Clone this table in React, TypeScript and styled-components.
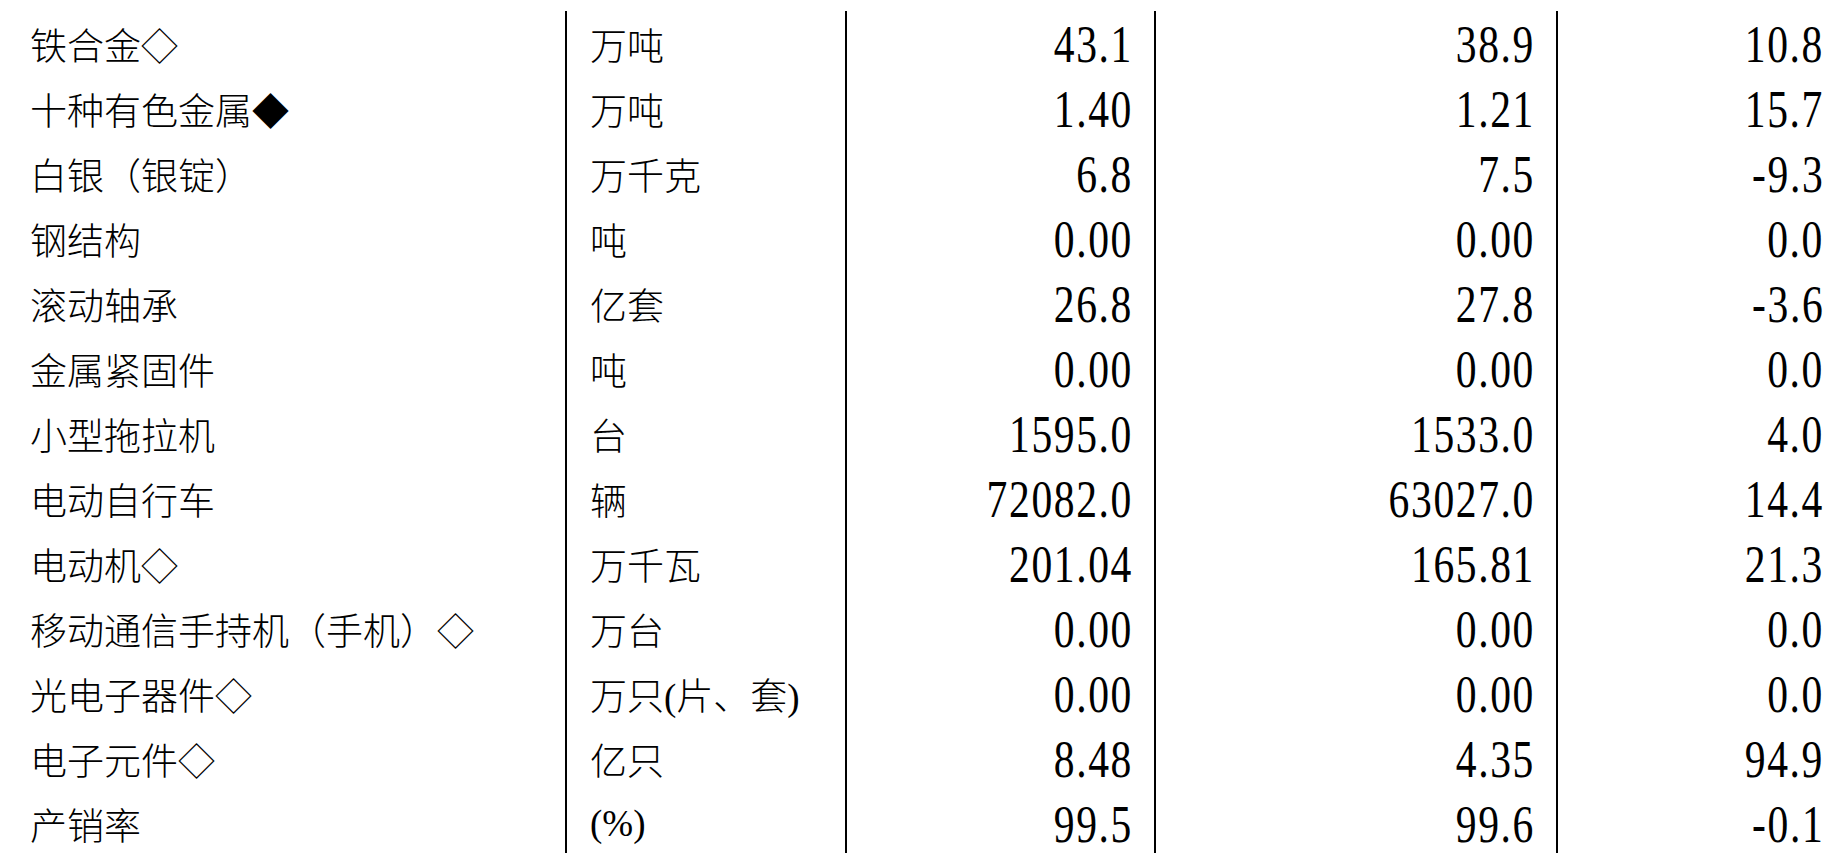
import styled, { createGlobalStyle } from "styled-components";

const rows = [
  { name: "铁合金◇", unit: "万吨", current: "43.1", previous: "38.9", growth: "10.8" },
  { name: "十种有色金属◆", unit: "万吨", current: "1.40", previous: "1.21", growth: "15.7" },
  { name: "白银（银锭）", unit: "万千克", current: "6.8", previous: "7.5", growth: "-9.3" },
  { name: "钢结构", unit: "吨", current: "0.00", previous: "0.00", growth: "0.0" },
  { name: "滚动轴承", unit: "亿套", current: "26.8", previous: "27.8", growth: "-3.6" },
  { name: "金属紧固件", unit: "吨", current: "0.00", previous: "0.00", growth: "0.0" },
  { name: "小型拖拉机", unit: "台", current: "1595.0", previous: "1533.0", growth: "4.0" },
  { name: "电动自行车", unit: "辆", current: "72082.0", previous: "63027.0", growth: "14.4" },
  { name: "电动机◇", unit: "万千瓦", current: "201.04", previous: "165.81", growth: "21.3" },
  { name: "移动通信手持机（手机）◇", unit: "万台", current: "0.00", previous: "0.00", growth: "0.0" },
  { name: "光电子器件◇", unit: "万只(片、套)", current: "0.00", previous: "0.00", growth: "0.0" },
  { name: "电子元件◇", unit: "亿只", current: "8.48", previous: "4.35", growth: "94.9" },
  { name: "产销率", unit: "(%)", current: "99.5", previous: "99.6", growth: "-0.1" },
];

export default function App() {
  return (
    <>
      <GlobalStyle />
      <Sheet>
        {rows.map((row) => (
          <Row key={row.name}>
            <NameCell>{row.name}</NameCell>
            <UnitCell>{row.unit}</UnitCell>
            <NumCell>
              <NumText>{row.current}</NumText>
            </NumCell>
            <NumCell>
              <NumText>{row.previous}</NumText>
            </NumCell>
            <NumCell>
              <NumText>{row.growth}</NumText>
            </NumCell>
          </Row>
        ))}
      </Sheet>
    </>
  );
}

const GlobalStyle = createGlobalStyle`
  html, body {
    margin: 0;
    padding: 0;
    background: #fff;
    overflow: hidden;
  }
  body {
    font-family: "Noto Sans CJK SC", sans-serif;
    color: #000;
  }
`;

const Sheet = styled.div`
  display: flex;
  flex-direction: column;
  padding-top: 11px;
`;

const Row = styled.div`
  display: grid;
  grid-template-columns: 565px 280px 309px 402px 1fr;
  height: 65px;
`;

const Cell = styled.div`
  display: flex;
  align-items: center;
  white-space: nowrap;
`;

const NameCell = styled(Cell)`
  padding-left: 30px;
  font-family: "Noto Sans CJK SC", sans-serif;
  font-weight: 300;
  font-size: 37px;
`;

const UnitCell = styled(Cell)`
  border-left: 2px solid #000;
  padding-left: 23px;
  font-family: "Liberation Serif", "Noto Sans CJK SC", serif;
  font-weight: 300;
  font-size: 37px;
`;

const NumCell = styled(Cell)`
  border-left: 2px solid #000;
  justify-content: flex-end;
  padding-top: 3px;
  padding-right: 21px;
`;

// tall, narrow digits like the half-width figures of a Song face
const NumText = styled.span`
  display: inline-block;
  font-family: "Liberation Serif", serif;
  font-size: 52px;
  line-height: 1;
  letter-spacing: 2px;
  transform: scaleX(0.8);
  transform-origin: right center;
`;
